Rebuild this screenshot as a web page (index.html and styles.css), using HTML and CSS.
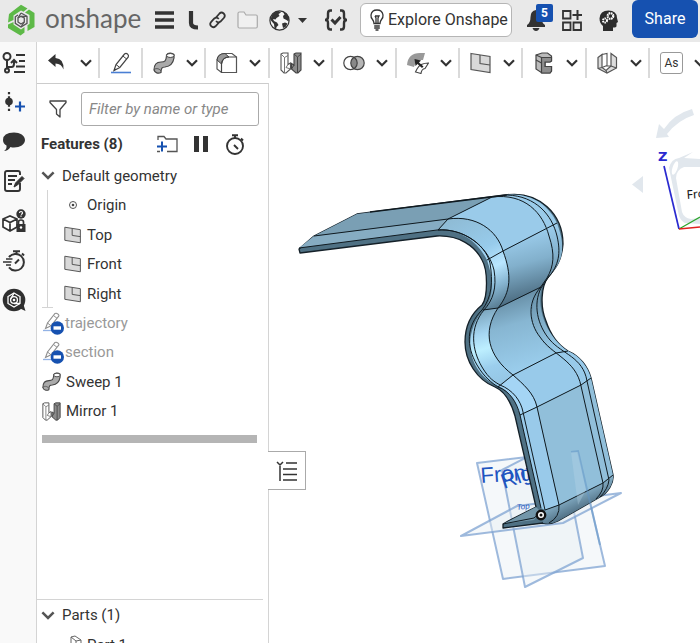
FILE: index.html
```html
<!DOCTYPE html>
<html lang="en">
<head>
<meta charset="utf-8">
<meta name="viewport" content="width=device-width, initial-scale=1">
<title>Onshape</title>
<link rel="stylesheet" href="styles.css">
</head>
<body>
<svg class="defs" aria-hidden="true">
  <defs>
    <symbol id="chevron" viewBox="0 0 12 8"><path d="M1 1.2 6 6.2 11 1.2" fill="none" stroke="currentColor" stroke-width="2.2"/></symbol>
    <symbol id="plane" viewBox="0 0 22 22"><path d="M1 1.5 20 4.500V20.500L1 17.500Z" fill="#d9d9d9" stroke="#555" stroke-width="1.200"/><path d="M10 3V11.500L20 13" fill="none" stroke="#555" stroke-width="1.200"/></symbol>
    <symbol id="pencil" viewBox="0 0 22 22"><path d="M1 20.500H21" stroke="#4a7fd4" stroke-width="1.600"/><path d="M4 18.500 6 12.500 14.500 2Q16 .8 17.500 2T18.300 5L9.800 15.500Z" fill="#fff" stroke="#444" stroke-width="1.200"/><path d="M12.800 4 16.700 7M6 12.500 9.800 15.500" stroke="#444" stroke-width="1"/><path d="M4 18.500 4.700 16.200 6.200 17.500Z" fill="#333"/></symbol>
    <symbol id="sweep" viewBox="0 0 22 22"><path d="M1 18C1 12 4 10 8 10C12 10 13 9 13.500 4V3C15 .5 19 .5 21 2.500V6C20 12 17 14.500 12 15C9 15.200 8 16 8 20.500C5 22 2 21 1 18Z" fill="#aaa" stroke="#444" stroke-width="1.200"/><ellipse cx="17.300" cy="3.500" rx="3.700" ry="2" fill="#fff" stroke="#444"/><path d="M1 18C2 16 6 16 8 19" fill="none" stroke="#555"/></symbol>
    <symbol id="mirror" viewBox="0 0 22 22"><path d="M1 2 3 1H8V12.500L10.500 11V17L6 21H4L1 18Z" fill="#fff" stroke="#555" stroke-width="1.100"/><path d="M1 2 4.500 5.500V21M4.500 5.500 8 3.500M8 12.500 6 15.500 10.500 17" fill="none" stroke="#777"/><path d="M14 2 16 1H21V18L18 21H16L11.500 17V11.500L14 13Z" fill="#8c8c8c" stroke="#444" stroke-width="1.100"/><path d="M21 2 17.500 5V21M17.500 5 14 2M14 13 11.500 17" fill="none" stroke="#444"/></symbol>
    <symbol id="suppressed" viewBox="0 0 22 24"><g opacity=".6"><path d="M1 19.500H12" stroke="#4a7fd4" stroke-width="1.300"/><path d="M3.500 17.500 5.500 12 13 2.500Q14.500 1.800 16 3.200T16.500 5.500L9 14.800Z" fill="#fff" stroke="#444" stroke-width="1.100"/><path d="M11.500 4.500 15 7.300M5.500 12 9 14.800" stroke="#444"/></g><circle cx="15.300" cy="17" r="6.700" fill="#1651b0"/><rect x="11.500" y="15.300" width="7.500" height="3.400" fill="#fff"/></symbol>
    <symbol id="part" viewBox="0 0 18 20"><path d="M7 2 11 1 17 5V19H1V10H7Z" fill="#fff" stroke="#666"/><path d="M7 2 12 6V19M12 6 17 5M1 10 6 13H12" fill="none" stroke="#666"/></symbol>
  </defs>
</svg>

<header class="topbar">
  <a class="brand" href="#" aria-label="onshape home">
    <svg width="28" height="32" viewBox="0 0 28 32" aria-hidden="true">
      <g fill="#5db947"><path d="M2 10 14 .8 20.500 4.500 16.500 7.800 14 6.500 6.500 11.500V16L1 18.500Z"/><path d="M22 5.500 27.500 9V23L20.500 27V21L22.500 20V11L18 8.500Z"/><path d="M1 20.500 6.500 18V20.500L14 25.500 17.500 23V28.500L13.500 31.500 1 24Z"/></g>
      <g fill="none" stroke="#555" stroke-width="1.300"><path d="M14 9 20 12.300V19.300L14 23 8.300 19.300V12.800L11 11"/><path d="M14 12.300 17.300 14V18L14 20 11 18V14Z"/><path d="M14 9 11 14M20 12.300 14 12.300M14 23 17.300 18"/></g>
    </svg>
    <span>onshape</span>
  </a>
  <button class="icon-btn w20" aria-label="Menu"><svg width="20" height="18" viewBox="0 0 20 18"><path d="M0 2H19M0 9H19M0 16H19" stroke="#333" stroke-width="3.400"/></svg></button>
  <span class="doc-mark"><svg width="12" height="19" viewBox="0 0 12 19"><path d="M4 0V12Q4 16.500 11 16.500" fill="none" stroke="#333" stroke-width="4.200"/></svg></span>
  <button class="icon-btn w16" aria-label="Copy link"><svg width="17" height="18" viewBox="0 0 17 18" fill="none" stroke="#333" stroke-width="1.800"><path d="M7 6.500 10.500 2.500Q12.500 .6 14.700 2.500 16.800 4.600 14.800 7L11.500 10.500Q9.200 12.300 7 10.200"/><path d="M10 11.500 6.500 15.300Q4.200 17.200 2.200 15.200 .2 13 2.200 10.800L5.300 7.500Q7.700 5.600 9.800 7.800"/></svg></button>
  <button class="icon-btn w20" aria-label="Folder"><svg width="21" height="18" viewBox="0 0 21 18"><path d="M1 2.500Q1 1 2.500 1H7L9 4H19Q20.300 4 20.300 5.500V15.500Q20.300 17 19 17H2.500Q1 17 1 15.500Z" fill="#f0f0f0" stroke="#aaa" stroke-width="1.200"/></svg></button>
  <button class="icon-btn globe" aria-label="Sharing"><svg width="21" height="21" viewBox="0 0 21 21"><circle cx="10.500" cy="10.500" r="9.600" fill="#f5f5f5" stroke="#333" stroke-width="1.200"/><path d="M2.500 6Q5 1.500 9.500 1L12 2.500 9.500 4 10.500 6 7.500 8 6.500 9.500 4 9 5 11 8 12.500 9.500 15 7.500 17 7 19.500 5.500 18 5 14 1.500 10ZM14 2 18 4 20 8 19.500 11.500 17.500 10 14.500 8.500 14 6 15.500 4.500ZM13 13.500 16 12.500 18.500 13.500 16.500 17 14 18Z" fill="#333"/></svg><svg width="9" height="5" viewBox="0 0 9 5"><path d="M0 0H9L4.500 5Z" fill="#333"/></svg></button>
  <button class="icon-btn versions" aria-label="Versions"><svg width="24" height="22" viewBox="0 0 24 22" fill="none" stroke="#333" stroke-width="2.400"><path d="M8 1.500H6.500Q4 1.500 4 4.500V8Q4 11 1 11 4 11 4 14V17.500Q4 20.500 6.500 20.500H8M16 1.500H17.500Q20 1.500 20 4.500V8Q20 11 23 11 20 11 20 14V17.500Q20 20.500 17.500 20.500H16"/><path d="M7.500 10.500 11 14 16.500 8" stroke-width="3"/></svg></button>
  <div class="account">
    <button class="explore"><svg width="14" height="22" viewBox="0 0 14 22" fill="none" stroke="#333" stroke-width="1.300"><path d="M4 14.500Q4 12.500 2.500 10.500 .7 8.500 1 6 1.700 1 7 1T13 6Q13.300 8.500 11.500 10.500 10 12.500 10 14.500ZM5 7H9L8 9V14M5 7 6 9V14M4.200 17H9.800M4.200 19H9.800M5.500 21H8.500"/></svg><span>Explore Onshape</span></button>
    <button class="icon-btn w24 bell" aria-label="Notifications"><svg width="20" height="22" viewBox="0 0 20 22" fill="#333"><path d="M10 1Q4.500 2 4.500 8 4.500 14 1 16V18H19V16Q15.500 14 15.500 8 15.500 2 10 1Z"/><path d="M6.500 19H13.500Q12.500 22 10 22T6.500 19Z"/></svg><span class="badge">5</span></button>
    <button class="icon-btn w24" aria-label="App store"><svg width="20" height="21" viewBox="0 0 20 21" fill="none" stroke="#333" stroke-width="1.800"><path d="M1 1H8.500V8.500H1ZM1 12.500H8.500V20H1ZM11.500 12.500H19V20H11.500Z"/><path d="M15.500 0V10M10.500 5H20.500" stroke-width="2"/></svg></button>
    <button class="icon-btn w24" aria-label="Learning"><svg width="19" height="21" viewBox="0 0 19 21"><path d="M4 21V16Q.5 13 .5 8.500 1 .5 9.500 .5 17.800 .5 18 8L19 12 17.500 13V16Q17.500 17.500 14 17.500V21Z" fill="#2d2d2d"/><circle cx="11.500" cy="6" r="2.800" fill="none" stroke="#fff" stroke-width="2.200" stroke-dasharray="1.600 .6"/><circle cx="6" cy="10.500" r="2" fill="none" stroke="#fff" stroke-width="2" stroke-dasharray="1.400 .6"/></svg></button>
    <button class="share">Share</button>
  </div>
</header>

<div class="main">
  <nav class="rail" aria-label="Panels">
    <div class="rail-list">
    <button class="icon-btn" aria-label="Feature list"><svg width="24" height="22" viewBox="0 0 24 22" fill="none" stroke="#333" stroke-width="2"><circle cx="5" cy="4.500" r="3.500"/><circle cx="5" cy="18.500" r="2"/><path d="M5 8V16.500M5 15H9.500Q12 15 12 11.500V8.500M9 11 12 8 15 11"/><path d="M14 3H23M17 9H23M14 14.500H23M12 20H23"/></svg></button>
    <button class="icon-btn" aria-label="Insert version"><svg width="24" height="22" viewBox="0 0 24 22" fill="none"><path d="M7 1V22" stroke="#333" stroke-width="2.200" stroke-dasharray="2.200 2"/><circle cx="7" cy="10.500" r="3.800" fill="#333"/><path d="M13 15.500H23M18 10.500V20.500" stroke="#1651b0" stroke-width="2.200"/></svg></button>
    <button class="icon-btn" aria-label="Comments"><svg width="24" height="20" viewBox="0 0 24 20"><path d="M12 .5C18 .5 23 3.500 23 8S18 15.500 12 15.500Q10 15.500 8.500 15 6 19 2 19 5 17 4.500 13.500 1 11.500 1 8 1 .5 12 .5Z" fill="#333"/></svg></button>
    <button class="icon-btn" aria-label="Notes"><svg width="22" height="22" viewBox="0 0 22 22" fill="none" stroke="#333" stroke-width="1.900"><path d="M17 13V19Q17 21 15 21H4Q2 21 2 19V3Q2 1 4 1H15Q17 1 17 3V5M5 6H14M5 10H12M5 14H9"/><path d="M11 17 12.500 13 19 6.500 21 8.500 14.500 15Z" fill="#333" stroke-width="1"/></svg></button>
    <button class="icon-btn" aria-label="Locked configurations"><svg width="24" height="24" viewBox="0 0 24 24"><path d="M1 10 8 7 15 10V18L8 22 1 18ZM1 10 8 13.500 15 10M8 13.500V22" fill="#fff" stroke="#333" stroke-width="1.700"/><circle cx="19" cy="5" r="4.700" fill="#333"/><path d="M17.500 4Q17.500 2.500 19 2.500T20.500 4Q20.500 5 19 5.500M19 6.500V7.800" fill="none" stroke="#fff" stroke-width="1.200"/><rect x="14.500" y="15" width="9" height="8" fill="#333"/><path d="M16.500 15V13Q16.500 11 19 11T21.500 13V15" fill="none" stroke="#333" stroke-width="1.700"/><circle cx="19" cy="18.500" r="1.200" fill="#fff"/></svg></button>
    <button class="icon-btn" aria-label="Performance"><svg width="24" height="22" viewBox="0 0 24 22" fill="none" stroke="#333"><path d="M7 7.200A8.300 8.300 0 1 1 7 17.300" stroke-width="2"/><path d="M11 1.200H18M14.500 1V4M20 3.500 22 5.500" stroke-width="2"/><path d="M13 13.500 17 9.500" stroke-width="2"/><path d="M4 9H10.500M1 12H9.500M4 15H9" stroke-width="1.500"/></svg></button>
    <button class="icon-btn" aria-label="Help"><svg width="24" height="24" viewBox="0 0 24 24"><circle cx="12" cy="12" r="11.300" fill="#2f2f2f"/><path d="M17 20 23.500 23 21 15Z" fill="#2f2f2f"/><g fill="none" stroke="#fff" stroke-width="1.300"><path d="M12 5 18 8.500V15.500L12 19 6 15.500V8.500Z"/><circle cx="12" cy="12" r="3.400"/><path d="M12 5 8.800 11M18 15.500 12 15.500"/></g><circle cx="12" cy="12" r="1.300" fill="#fff"/></svg></button>
    </div>
  </nav>

  <div class="content">
    <div class="toolbar" role="toolbar" aria-label="Feature tools">
      <button class="tool" aria-label="Undo"><svg width="22" height="22" viewBox="0 0 22 22"><path d="M1 8.500 8.500 2V6Q17 6.500 16.500 17.500 14.500 11.500 8.500 11.500V15Z" fill="#333"/></svg><svg class="chev"><use href="#chevron"/></svg></button>
      <button class="tool" aria-label="Sketch"><svg width="22" height="22"><use href="#pencil"/></svg></button>
      <button class="tool" aria-label="Sweep"><svg width="22" height="22"><use href="#sweep"/></svg><svg class="chev"><use href="#chevron"/></svg></button>
      <button class="tool" aria-label="Fillet"><svg width="22" height="22" viewBox="0 0 22 22"><path d="M1 8Q2 1.500 9 1.500H16L20.500 5V20.500H5.500L1 17Z" fill="#fff" stroke="#555" stroke-width="1.200"/><path d="M1 8Q2 1.500 9 1.500L13 5Q6.500 5 5.500 12L1 8Z" fill="#999" stroke="#444"/><path d="M5.500 20.500V12Q6.500 5 13 5H20.500" fill="none" stroke="#444" stroke-width="1.200"/></svg><svg class="chev"><use href="#chevron"/></svg></button>
      <button class="tool" aria-label="Mirror"><svg width="22" height="22"><use href="#mirror"/></svg><svg class="chev"><use href="#chevron"/></svg></button>
      <button class="tool" aria-label="Boolean"><svg width="22" height="22" viewBox="0 0 22 22"><circle cx="7.500" cy="11" r="6.700" fill="#fff"/><circle cx="14.500" cy="11" r="6.700" fill="#b5b5b5"/><path d="M11 5.300A6.700 6.700 0 0 1 11 16.700 6.700 6.700 0 0 1 11 5.300Z" fill="#888"/><circle cx="7.500" cy="11" r="6.700" fill="none" stroke="#444" stroke-width="1.200"/><circle cx="14.500" cy="11" r="6.700" fill="none" stroke="#444" stroke-width="1.200"/></svg><svg class="chev"><use href="#chevron"/></svg></button>
      <button class="tool" aria-label="Modify surface"><svg width="22" height="22" viewBox="0 0 22 22"><path d="M0 13Q1 1 13 1H18L16 8Q9 7 7 15Z" fill="#999"/><path d="M10 17Q13 11 21.500 11L18 16.500Q14.500 17 14 21.500L8.500 20Z" fill="#fff" stroke="#444" stroke-width="1.100"/><path d="M7.500 7 14 8.500 12 10.500 16.500 14.500 15 16 10.500 12 8.500 14Z" fill="#222"/></svg><svg class="chev"><use href="#chevron"/></svg></button>
      <button class="tool" aria-label="Plane"><svg width="22" height="22"><use href="#plane"/></svg><svg class="chev"><use href="#chevron"/></svg></button>
      <button class="tool" aria-label="Sheet metal"><svg width="22" height="22" viewBox="0 0 22 22"><path d="M3 3 9 1H14.500L18.500 4V9L17 10H12V14.500H18.500V19L17 21H9L3 17Z" fill="#bbb" stroke="#444" stroke-width="1.200"/><path d="M8.500 5.500H18.500V9L17 10H12V14.500H18.500V19L17 21H8.500Z" fill="#8e8e8e" stroke="#444" stroke-width="1.200"/><path d="M3 3 8.500 5.500M3 8 8.500 11" fill="none" stroke="#444" stroke-width="1.100"/></svg><svg class="chev"><use href="#chevron"/></svg></button>
      <button class="tool" aria-label="Flange"><svg width="22" height="22" viewBox="0 0 22 22"><path d="M1 5.500 5 2.500V15.500L9 18.500 14 14V1.500L19.500 5.500V16L10 21 1 16.500Z" fill="#ddd" stroke="#555" stroke-width="1.200"/><path d="M5 2.500 10 1.500V14L14 14M5 15.500 10 13.500M1 16.500 5 15.500M14 14 19.500 16M9 18.500 10 21" fill="none" stroke="#555" stroke-width="1.100"/></svg><svg class="chev"><use href="#chevron"/></svg></button>
      <button class="tool" aria-label="Assembly"><span class="as">As</span><svg class="chev"><use href="#chevron"/></svg></button>
    </div>

    <div class="workspace">
      <aside class="panel">
        <div class="filter">
          <label for="filter" aria-label="Filter"><svg width="18" height="18" viewBox="0 0 18 18"><path d="M1 1H17V2.500L11 9.500V17L7.500 14V9.500L1 2.500Z" fill="#fff" stroke="#444" stroke-width="1.300" stroke-linejoin="round"/></svg></label>
          <input id="filter" type="text" placeholder="Filter by name or type">
        </div>
        <div class="features">
          <h2>Features (8)</h2>
          <button class="icon-btn w24" aria-label="Add folder"><svg width="22" height="18" viewBox="0 0 22 18" fill="none"><path d="M2 5V1.500H8L10 4H21V16.500H11M1 16.500H4" stroke="#555" stroke-width="1.300"/><path d="M1 11.500H11M6 6.500V16.500" stroke="#1651b0" stroke-width="2"/></svg></button>
          <button class="icon-btn w24" aria-label="Pause"><svg width="14" height="16" viewBox="0 0 14 16"><path d="M0 0H5V16H0ZM9 0H14V16H9Z" fill="#333"/></svg></button>
          <button class="icon-btn w24" aria-label="Timing"><svg width="20" height="21" viewBox="0 0 20 21" fill="none" stroke="#333" stroke-width="1.900"><circle cx="10" cy="12" r="8"/><path d="M7 1.200H13M10 1V4M16 4.500 18 6.500M9 11 13 15"/></svg></button>
        </div>
        <ul class="tree">
          <li class="branch">
            <button class="row head"><svg class="fold"><use href="#chevron"/></svg>Default geometry</button>
            <ul class="children">
              <li class="row"><svg width="18" height="18" viewBox="0 0 18 18"><circle cx="9" cy="9" r="3.500" fill="none" stroke="#555"/><circle cx="9" cy="9" r="1.300" fill="#444"/></svg>Origin</li>
              <li class="row"><svg width="18" height="18"><use href="#plane"/></svg>Top</li>
              <li class="row"><svg width="18" height="18"><use href="#plane"/></svg>Front</li>
              <li class="row"><svg width="18" height="18"><use href="#plane"/></svg>Right</li>
            </ul>
          </li>
          <li class="row leaf off"><svg width="22" height="24"><use href="#suppressed"/></svg>trajectory</li>
          <li class="row leaf off"><svg width="22" height="24"><use href="#suppressed"/></svg>section</li>
          <li class="row leaf"><svg width="19" height="19"><use href="#sweep"/></svg>Sweep 1</li>
          <li class="row leaf"><svg width="19" height="19"><use href="#mirror"/></svg>Mirror 1</li>
        </ul>
        <div class="rollback"></div>
        <section class="parts">
          <button class="row head"><svg class="fold"><use href="#chevron"/></svg>Parts (1)</button>
          <div class="row part"><svg width="18" height="20"><use href="#part"/></svg>Part 1</div>
        </section>
      </aside>

      <div class="viewport">
        <button class="flyout" aria-label="Toggle feature list"><svg width="22" height="22" viewBox="0 0 22 22" fill="none" stroke="#333" stroke-width="1.500"><path d="M1 2 4 5 7 2M10 3H21M7 9H21M7 14.500H21M7 20H21M4 6V21"/></svg></button>
        <svg class="scene" viewBox="270 83 430 559" width="430" height="559" role="img" aria-label="Swept bracket model">
          <defs>
            <linearGradient id="bend" gradientUnits="userSpaceOnUse" x1="500" y1="205" x2="525" y2="298"><stop offset="0" stop-color="#93c4e2"/><stop offset=".35" stop-color="#9ccdec"/><stop offset=".65" stop-color="#82b0cc"/><stop offset="1" stop-color="#4f7085"/></linearGradient>
            <linearGradient id="bevel1" gradientUnits="userSpaceOnUse" x1="450" y1="222" x2="492" y2="308"><stop offset="0" stop-color="#8fbcd6"/><stop offset=".4" stop-color="#97cbeb"/><stop offset=".62" stop-color="#b9e6ff"/><stop offset=".82" stop-color="#86b4d0"/><stop offset="1" stop-color="#5d8298"/></linearGradient>
            <linearGradient id="valley" gradientUnits="userSpaceOnUse" x1="515" y1="298" x2="535" y2="366"><stop offset="0" stop-color="#6a92aa"/><stop offset=".35" stop-color="#87b6d2"/><stop offset="1" stop-color="#9acdec"/></linearGradient>
            <linearGradient id="bevel2" gradientUnits="userSpaceOnUse" x1="483" y1="310" x2="505" y2="382"><stop offset="0" stop-color="#7ba5bd"/><stop offset=".3" stop-color="#a6d6f2"/><stop offset=".5" stop-color="#bdefff"/><stop offset=".75" stop-color="#9bceed"/><stop offset="1" stop-color="#95c6e4"/></linearGradient>
            <linearGradient id="under" gradientUnits="userSpaceOnUse" x1="572" y1="495" x2="580" y2="512"><stop offset="0" stop-color="#86b0c8"/><stop offset="1" stop-color="#4d6c80"/></linearGradient>
            <linearGradient id="rim" gradientUnits="userSpaceOnUse" x1="530" y1="300" x2="560" y2="345"><stop offset="0" stop-color="#6e97af"/><stop offset="1" stop-color="#97c9e7"/></linearGradient>
          </defs>

          <g fill="#e9eff5" fill-opacity=".45" stroke="#7fa3d1" stroke-opacity=".75" stroke-width="2" stroke-linejoin="round">
            <path d="M477 463 578 451 605 566 503 579Z"/>
            <path d="M502 470 560 440 583 558 525 587Z"/>
            <path d="M461 536 517 506 621 493 563 523Z"/>
          </g>
          <g class="plane-label">
            <text x="481" y="483" font-size="22" transform="rotate(-4 481 483)">Front</text>
            <text class="narrow" x="504" y="489" font-size="21" transform="rotate(-20 504 489)">Right</text>
            <text x="517" y="510" font-size="8" font-style="italic" transform="rotate(-7 517 510)">Top</text>
          </g>

          <g stroke-linejoin="round">
            <path d="M299 249 314 236 357 214 505 195C540 190 563 215 563 244 562 260 556 268 548 277 541 287 540 307 546 321 551 336 558 345 568 351 580 356 588 367 591 378L613 475C614 483 608 493 600 497L558 521Q550 525 543 523L503 528V524L512 519 536 507 515 416C511 402 504 391 495 387 477 380 465 361 465 342 465 325 472 313 482 305 488 297 488 270 482 260 475 246 459 235 437 236L300 253Z" fill="#4f7184" stroke="#142028" stroke-width="1.300"/>
            <path d="M314 236 357 214 492 197 448 219Z" fill="#7a9fb4"/>
            <path d="M299 248 314 236 448 219 438 230Z" fill="#86acc2"/>
            <path d="M448 219C476 215 497 230 503 251L557 223C549 205 530 192 505 195L492 197Z" fill="#9acbea"/>
            <path d="M503 251C512 275 511 292 498 308L542 287 548 277C562 263 567 250 557 223Z" fill="url(#bend)"/>
            <path d="M438 230 448 219C476 215 497 230 503 251 512 275 511 292 498 308L484 310C495 295 493 277 487 260 478 242 461 229 438 230Z" fill="url(#bevel1)"/>
            <path d="M498 308 542 287C530 300 528 323 540 337 545 345 550 350 556 353L513 375C488 356 482 332 498 308Z" fill="url(#valley)"/>
            <path d="M542 287C530 300 528 323 540 337 545 345 550 350 556 353L568 351C550 340 535 311 542 287Z" fill="url(#rim)"/>
            <path d="M484 310 498 308C482 332 488 356 513 375L498 386C465 372 463 330 484 310Z" fill="url(#bevel2)"/>
            <path d="M513 375 556 353 568 351C580 356 588 367 591 378L581 385 537 407C534 393 523 384 513 375Z" fill="#98caea"/>
            <path d="M498 386 513 375C523 384 534 393 537 407L520 415C516 400 508 390 498 386Z" fill="#a4d5f5"/>
            <path d="M537 407 581 385 591 378 613 475 603 483 559 505Z" fill="#91bfda"/>
            <path d="M520 415 537 407 559 505 545 510 541 508Z" fill="#99caea"/>
            <path d="M545 510 559 505 603 483 613 475C614 483 608 493 600 497L558 521Q550 525 543 523Z" fill="url(#under)"/>
            <path d="M503 524 536 507 541 512 534 520Z" fill="#7397aa"/>
          </g>
          <g fill="none" stroke="#101a20" stroke-width="1" stroke-linejoin="round">
            <path d="M314 236 448 219C476 215 497 230 503 251 512 275 511 292 498 308 482 332 488 356 513 375 523 384 534 393 537 407L559 505Q560 517 549 523"/>
            <path d="M299 248 437 230C461 228 485 243 490 263 493 282 492 297 482 310 466 326 466 346 477 365 484 377 492 383 498 387 510 391 517 403 520 415L541 508"/>
            <path d="M438 230C462 228 488 245 494 270 497 288 493 300 484 310 469 328 472 350 482 367 489 379 495 382 500 385 513 390 521 401 523 412L545 510"/>
            <path d="M492 197C525 193 543 213 549 236 555 254 554 266 547 278L540 288C527 303 529 323 540 337 552 355 576 360 581 386L603 483"/>
            <path d="M507 195C536 196 552 215 557 236 561 253 559 265 548 278L541 288C533 304 537 325 550 340 562 354 583 357 587 381L609 480"/>
            <path d="M438 230 448 219 492 197M487 260 503 251 557 223M483 310 498 308 541 287M498 387 513 375 556 353 568 351M520 415 537 407 581 385 591 378M545 510 559 505 603 483 613 475M503 524 534 518 541 512M603 483Q604 491 596 499M609 480Q608 489 600 497"/>
            <path d="M370 212 507 195" stroke-width="1.600"/>
          </g>
          <path d="M571 452 578 451 600 545" fill="none" stroke="#5f93c6" stroke-opacity=".5" stroke-width="2"/>
          <path d="M571 452H578L586 490 578 505Z" fill="#c0dbea" opacity=".3"/>
          <circle cx="541" cy="515" r="4.200" fill="#fff" stroke="#111" stroke-width="2.400"/><circle cx="541" cy="515" r="1.500" fill="#111"/>

          <g fill="#e1e7ed">
            <path d="M692 109Q674 114 664 129L659 124 656 138 669 137 667 134Q678 120 694 115Z"/>
            <path d="M632 184.500 643 176V193Z"/>
            <path d="M669 168Q671 159 679 158L693 152 684 158 700 159V167H684Q676 170 676 178L682 212Q684 218 691 219L700 218V224L685 223Q681 221 679 216Z"/>
          </g>
          <ellipse cx="675" cy="168" rx="2.500" ry="7" transform="rotate(18 675 168)" fill="#fff"/>
          <path d="M664 166 679 229" stroke="#2a2ad0" stroke-width="1.700"/><path d="M679 229 700 217" stroke="#2aa52a" stroke-width="1.200"/><path d="M679 229 700 227" stroke="#e02020" stroke-width="1.700"/>
          <text class="axis" x="658" y="161">Z</text>
          <text class="face" x="687" y="199" transform="rotate(-5 687 199)">Front</text>
        </svg>
      </div>
    </div>
  </div>
</div>
</body>
</html>
```
FILE: styles.css
```css
* { box-sizing: border-box; }

body {
  display: flex;
  flex-direction: column;
  height: 100vh;
  margin: 0;
  overflow: hidden;
  background: #fff;
  color: #333;
  font: 15px/20px Roboto, "Liberation Sans", sans-serif;
}

button, input { font: inherit; color: inherit; }
button { padding: 0; border: 0; background: none; cursor: pointer; }
ul { margin: 0; padding: 0; list-style: none; }
svg { display: block; flex: none; }
.defs { position: absolute; width: 0; height: 0; }

/* Top bar */
.topbar {
  display: flex;
  flex: none;
  align-items: center;
  gap: 12px;
  height: 42px;
  padding: 0 2px 2px 7px;
  background: #e9e9e9;
}
.brand {
  display: flex;
  align-items: center;
  gap: 10px;
  width: 139px;
  color: #666;
  font: 400 26px/34px Lato, sans-serif;
  text-decoration: none;
}
.brand span { height: 38px; }
.icon-btn {
  display: flex;
  flex: none;
  align-items: center;
  justify-content: center;
}
.w16 { width: 16px; }
.w20 { width: 20px; }
.w24 { width: 24px; }
.doc-mark { width: 10px; }
.globe { gap: 8px; width: 37px; }
.versions { margin-left: 6px; }
.account {
  display: flex;
  flex: none;
  align-items: center;
  align-self: stretch;
  gap: 12px;
  margin-left: auto;
  font-size: 16px;
}
.explore {
  display: flex;
  align-items: center;
  gap: 4px;
  width: 152px;
  height: 34px;
  padding: 0 4px 0 9px;
  border: 1px solid #b5b5b5;
  border-radius: 6px;
  background: #fff;
  white-space: nowrap;
}
.bell { position: relative; }
.badge {
  position: absolute;
  top: -5px;
  right: -5px;
  width: 17px;
  height: 18px;
  border-radius: 2px;
  background: #1651b0;
  color: #fff;
  font: 700 12px/18px Roboto, sans-serif;
}
.share {
  align-self: flex-start;
  width: 66px;
  height: 38px;
  border-radius: 6px;
  background: #1651b0;
  color: #fff;
}

/* Left rail */
.main { display: flex; flex: 1; min-height: 0; }
.rail {
  flex: none;
  width: 37px;
  padding: 1px 8px 0 0;
  border-right: 1px solid #d4d4d4;
  background: #f9f9f9;
}
.rail-list {
  display: grid;
  grid-template-rows: repeat(7, 1fr);
  justify-content: center;
  height: 277px;
}
.content { display: flex; flex: 1; flex-direction: column; min-width: 0; }

/* Toolbar */
.toolbar {
  display: grid;
  flex: none;
  grid-template-columns: 61px 43px 63px 64px 63px 64px 63px 63px 64px 63px 64px;
  align-items: center;
  height: 41px;
}
.tool {
  display: flex;
  align-items: center;
  gap: 11px;
  height: 30px;
  padding-left: 10px;
}
.tool + .tool { border-left: 2px solid #dadada; }
.chev { width: 12px; height: 8px; }
.as {
  flex: none;
  width: 23px;
  height: 22px;
  border: 1px solid #999;
  border-radius: 3px;
  font-size: 12px;
}

/* Feature panel */
.workspace { display: flex; flex: 1; min-height: 0; }
.panel {
  display: flex;
  flex: none;
  flex-direction: column;
  width: 232px;
  border-top: 1px solid #ccc;
  border-right: 1px solid #d4d4d4;
}
.filter {
  display: flex;
  align-items: center;
  gap: 14px;
  padding: 8px 9px 0 12px;
}
.filter input {
  flex: 1;
  min-width: 0;
  height: 34px;
  padding: 0 7px;
  border: 1px solid #aaa;
  border-radius: 3px;
}
.filter input::placeholder { color: #888; font-style: italic; }
.features {
  display: flex;
  align-items: center;
  gap: 10px;
  height: 35px;
  padding: 1px 21px 0 4px;
}
.features h2 { flex: 1; margin: 0; font-size: 15px; line-height: 20px; }
.tree { display: flex; flex-direction: column; height: 265px; }
.row {
  display: flex;
  flex: 1;
  align-items: center;
  gap: 5px;
  white-space: nowrap;
}
.branch { display: flex; flex: 5; flex-direction: column; }
.head { gap: 7px; width: 100%; padding-left: 4px; }
.fold { width: 14px; height: 9px; color: #555; }
.children {
  position: relative;
  display: flex;
  flex: 4;
  flex-direction: column;
  margin-left: 10px;
  padding-left: 16px;
  border-left: 1px solid #d4d4d4;
}
.children::after {
  position: absolute;
  bottom: 0;
  left: -6px;
  width: 11px;
  border-bottom: 1px solid #d4d4d4;
  content: "";
}
.leaf { padding-left: 5px; }
.off { gap: 1px; color: #999; }
.rollback { height: 8px; margin: 9px 11px 0 5px; background: #b5b5b5; }
.parts {
  flex: none;
  height: 44px;
  margin: auto 5px 0 0;
  overflow: hidden;
  border-top: 1px solid #d4d4d4;
}
.parts .row { height: 30px; }
.part { padding-left: 27px; }

/* Graphics area */
.viewport { position: relative; flex: 1; min-width: 0; }
.scene { margin-left: 1px; overflow: visible; }
.flyout {
  position: absolute;
  top: 368px;
  left: -1px;
  display: flex;
  align-items: center;
  justify-content: center;
  width: 38px;
  height: 39px;
  border: 1px solid #aaa;
  border-left: 0;
  background: #fff;
}
.plane-label { fill: #1f55c0; font-family: "Liberation Sans", sans-serif; }
.narrow { font-family: "Liberation Sans Narrow", "Liberation Sans", sans-serif; }
.axis { fill: #2a2ad0; font: 700 13px "DejaVu Sans", sans-serif; }
.face { fill: #111; font: 12px "Noto Sans", sans-serif; }
```
